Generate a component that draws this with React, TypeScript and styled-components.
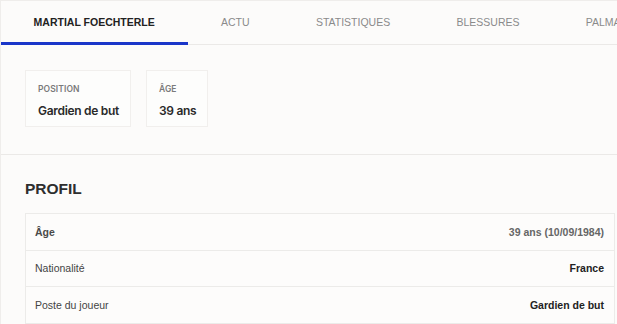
import React from "react";
import styled, { createGlobalStyle } from "styled-components";

const Global = createGlobalStyle`
  html, body { margin: 0; padding: 0; background: #fcfbfa; overflow: hidden; }
  * { box-sizing: border-box; }
`;

const Page = styled.div`
  width: 640px;
  min-height: 324px;
  background: #fcfbfa;
  border-top: 1px solid #efedeb;
  border-left: 1px solid #efedeb;
  font-family: "Liberation Sans", Arial, sans-serif;
`;

const TabBar = styled.nav`
  display: flex;
  height: 44px;
  border-bottom: 1px solid #ebe9e7;
  white-space: nowrap;
`;

const Tab = styled.div<{ $active?: boolean }>`
  display: flex;
  align-items: center;
  padding: 1px 33.7px 0 32.6px;
  height: 44px;
  margin-bottom: -1px;
  font-size: 10.5px;
  font-weight: ${(p) => (p.$active ? 700 : 400)};
  color: ${(p) => (p.$active ? "#222" : "#8a8a8a")};
  border-bottom: 3px solid ${(p) => (p.$active ? "#1a36c9" : "transparent")};
`;

const StatSection = styled.section`
  display: flex;
  gap: 15px;
  padding: 25px 24px 27px;
  border-bottom: 1px solid #ebe9e7;
`;

const StatCard = styled.div`
  display: flex;
  flex-direction: column;
  height: 57px;
  padding: 13px 11px 0 12px;
  background: #fdfdfc;
  border: 1px solid #f1efed;
  font-family: Inter, "Noto Sans", sans-serif;
`;

const StatLabel = styled.div`
  font-size: 8.5px;
  font-weight: 600;
  color: #7a7a7a;
  letter-spacing: 0.1px;
  text-transform: uppercase;
`;

const StatValue = styled.div`
  margin-top: 9px;
  font-size: 12px;
  font-weight: 600;
  color: #2a2a2a;
  letter-spacing: -0.3px;
`;

const Profile = styled.section`
  padding: 25px 0 0 24px;
`;

const Heading = styled.h2`
  margin: 0 0 15px;
  font-size: 15.5px;
  font-weight: 700;
  color: #2e2e2e;
  line-height: 18px;
`;

const Table = styled.div`
  width: 590px;
  border: 1px solid #ecebe9;
  border-bottom: none;
  background: #fdfcfb;
`;

const Row = styled.div`
  display: flex;
  justify-content: space-between;
  align-items: center;
  height: 36.6px;
  padding: 0 10px 0 9px;
  border-bottom: 1px solid #ecebe9;
  font-size: 10.5px;
`;

const Label = styled.span<{ $strong?: boolean }>`
  color: ${(p) => (p.$strong ? "#4a4a4a" : "#444")};
  font-weight: ${(p) => (p.$strong ? 700 : 400)};
`;

const Value = styled.span<{ $muted?: boolean }>`
  font-weight: 700;
  color: ${(p) => (p.$muted ? "#666" : "#222")};
`;

const tabs = ["MARTIAL FOECHTERLE", "ACTU", "STATISTIQUES", "BLESSURES", "PALMARÈS"];

const rows = [
  { label: "Âge", value: "39 ans (10/09/1984)", strong: true, muted: true },
  { label: "Nationalité", value: "France" },
  { label: "Poste du joueur", value: "Gardien de but" },
];

export default function App() {
  return (
    <Page>
      <Global />
      <TabBar>
        {tabs.map((t, i) => (
          <Tab key={t} $active={i === 0}>
            {t}
          </Tab>
        ))}
      </TabBar>
      <StatSection>
        <StatCard>
          <StatLabel>Position</StatLabel>
          <StatValue>Gardien de but</StatValue>
        </StatCard>
        <StatCard>
          <StatLabel>Âge</StatLabel>
          <StatValue>39 ans</StatValue>
        </StatCard>
      </StatSection>
      <Profile>
        <Heading>PROFIL</Heading>
        <Table>
          {rows.map((r) => (
            <Row key={r.label}>
              <Label $strong={r.strong}>{r.label}</Label>
              <Value $muted={r.muted}>{r.value}</Value>
            </Row>
          ))}
        </Table>
      </Profile>
    </Page>
  );
}
